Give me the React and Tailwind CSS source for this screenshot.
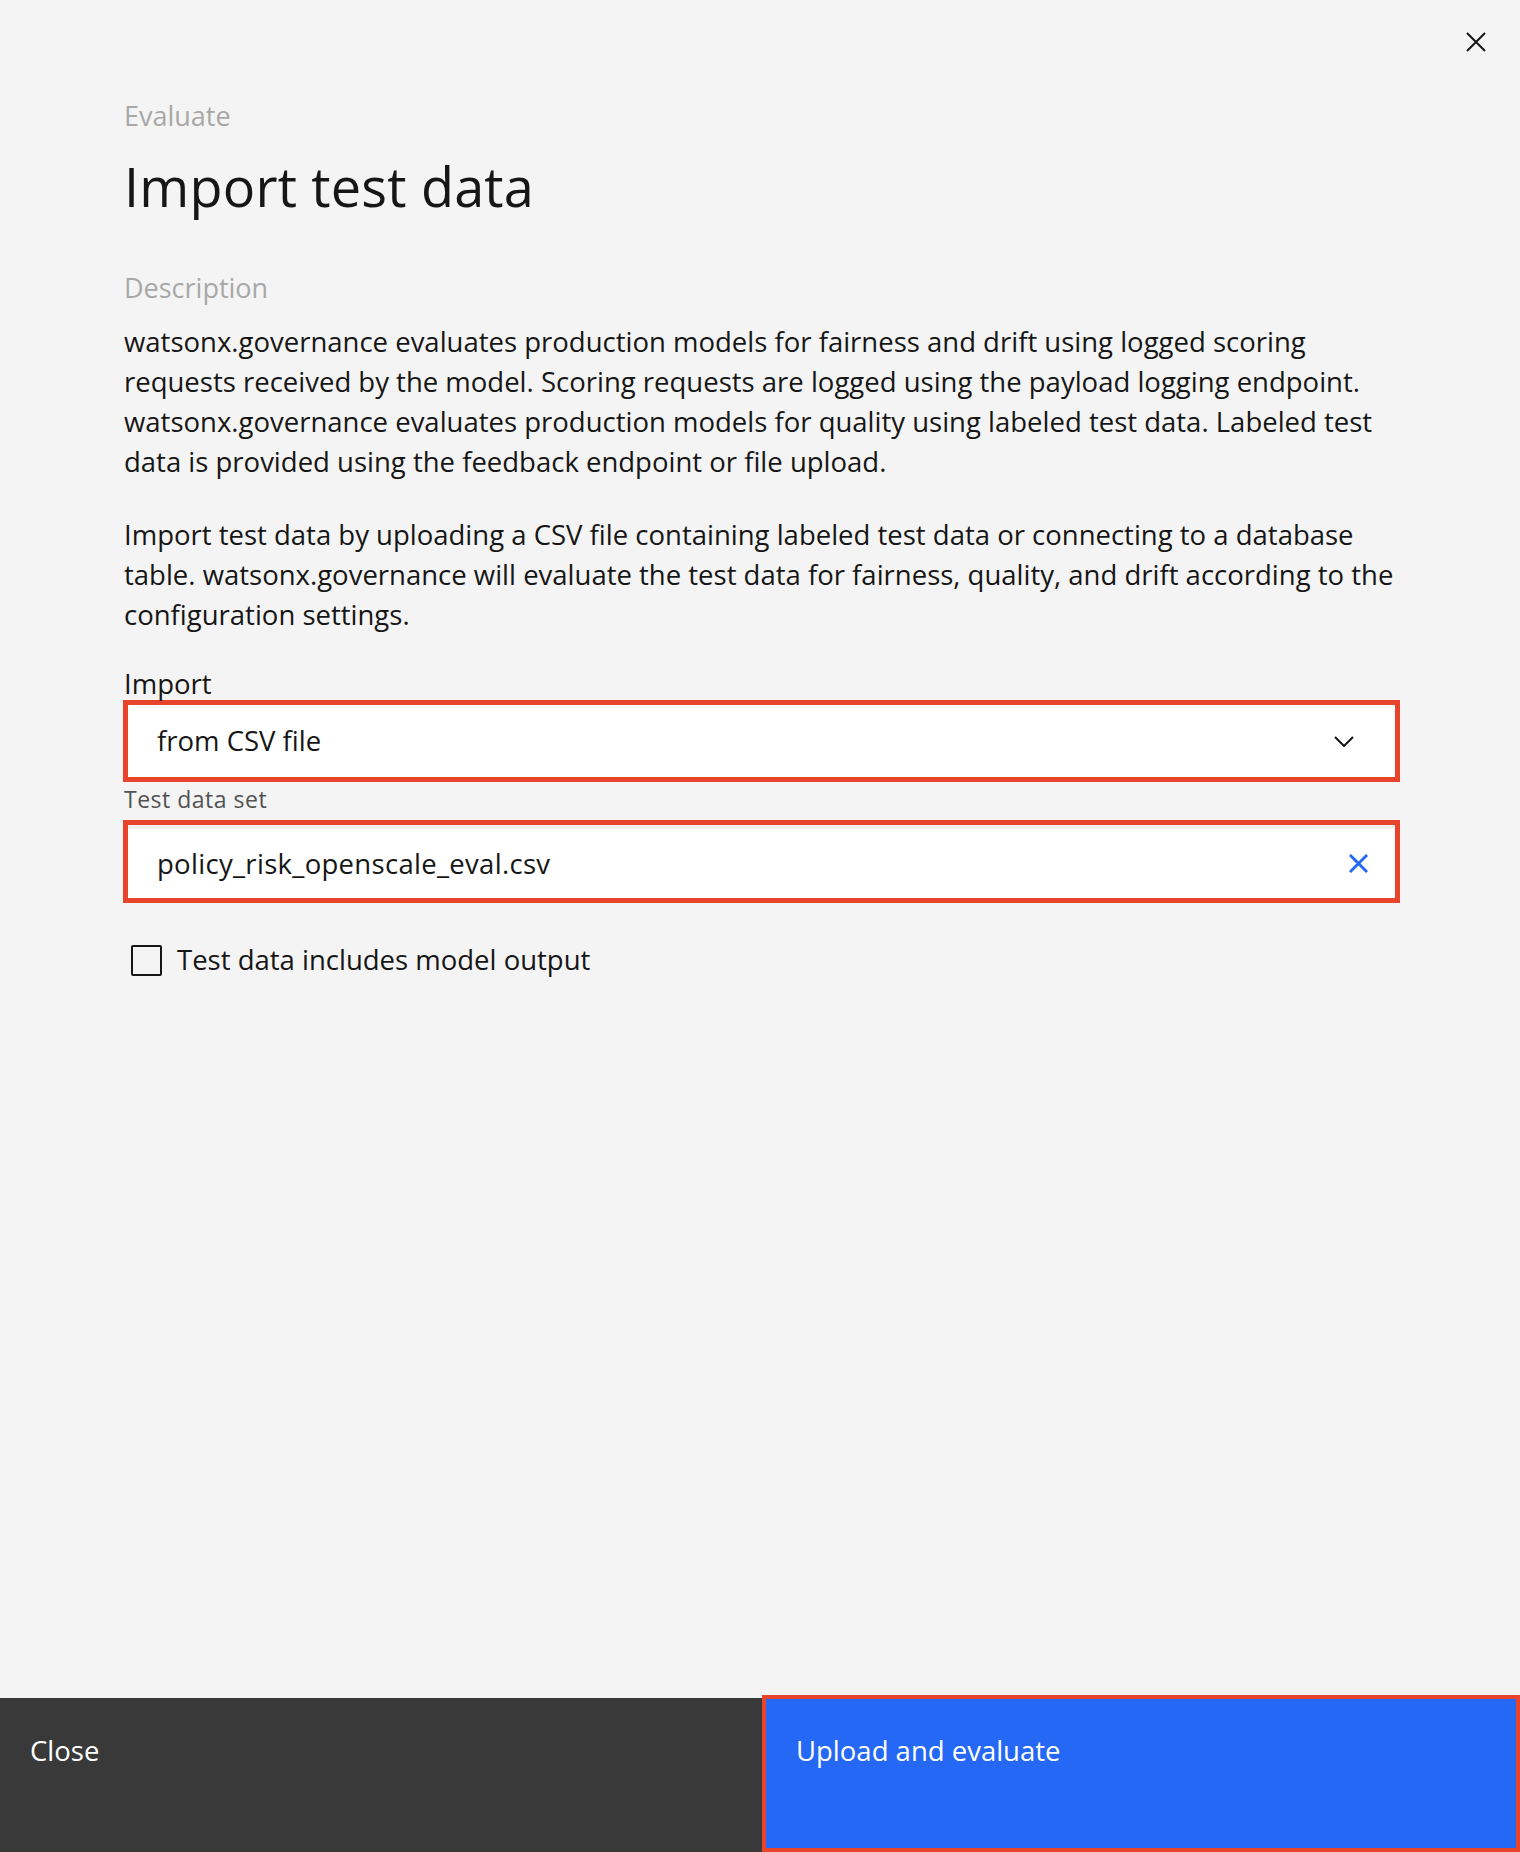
import React from 'react';

const FONT = { fontFamily: '"Open Sans", "Noto Sans", Arial, sans-serif' };

// Close (X) icon used top-right and inside the file field
const CrossIcon = ({ className, strokeWidth = 2 }) => (
  <svg className={className} viewBox="0 0 20 20" fill="none" stroke="currentColor" strokeWidth={strokeWidth}>
    <path d="M1 1 L19 19 M19 1 L1 19" />
  </svg>
);

const ChevronIcon = ({ className }) => (
  <svg className={className} viewBox="0 0 20 11" fill="none" stroke="currentColor" strokeWidth={2}>
    <path d="M1 1 L10 10 L19 1" />
  </svg>
);

export default function App() {
  return (
    <div className="h-screen w-full flex flex-col bg-[#f4f4f4] text-[#161616] overflow-hidden" style={FONT}>
      {/* Body */}
      <div className="relative flex-1 pl-[124px] pr-[120px] pt-[98px]">
        <button className="absolute right-[34px] top-[32px] w-[20px] h-[20px] text-[#161616]">
          <CrossIcon className="w-[20px] h-[20px]" />
        </button>

        <p className="text-[27px] leading-[36px] text-[#a8a8a8]">Evaluate</p>
        <h1 className="mt-[20px] text-[54px] leading-[64px] font-normal tracking-[0.2px]">Import test data</h1>

        <p className="mt-[52px] text-[27px] leading-[36px] text-[#a8a8a8]">Description</p>
        <p className="mt-[16px] text-[27.5px] leading-[40px] whitespace-nowrap">
          watsonx.governance evaluates production models for fairness and drift using logged scoring<br />
          requests received by the model. Scoring requests are logged using the payload logging endpoint.<br />
          watsonx.governance evaluates production models for quality using labeled test data. Labeled test<br />
          data is provided using the feedback endpoint or file upload.
        </p>
        <p className="mt-[33px] text-[27.5px] leading-[40px] whitespace-nowrap">
          Import test data by uploading a CSV file containing labeled test data or connecting to a database<br />
          table. watsonx.governance will evaluate the test data for fairness, quality, and drift according to the<br />
          configuration settings.
        </p>

        {/* Import select */}
        <p className="mt-[33px] text-[27.5px] leading-[32px]">Import</p>
        <div className="-ml-[1px] h-[82px] flex items-center justify-between bg-white border-[5px] border-[#e8442b] pl-[29px] pr-[41px]">
          <span className="text-[27.5px] leading-[36px]">from CSV file</span>
          <ChevronIcon className="w-[20px] h-[11px] text-[#161616]" />
        </div>

        {/* Test data set */}
        <p className="mt-[3px] text-[23px] leading-[28px] tracking-[0.5px] text-[#525252]">Test data set</p>
        <div className="-ml-[1px] mt-[7px] h-[83px] flex flex-col bg-white border-[5px] border-[#e8442b]">
          <div className="h-[4px] bg-[#f0f0f0]" />
          <div className="flex-1 flex items-center justify-between pl-[29px] pr-[27px]">
            <span className="text-[27.5px] leading-[36px] tracking-[0.3px]">policy_risk_openscale_eval.csv</span>
            <CrossIcon className="w-[19px] h-[19px] text-[#2468f2]" strokeWidth={3} />
          </div>
        </div>

        {/* Checkbox */}
        <label className="mt-[39px] ml-[7px] flex items-center gap-[15px]">
          <span className="w-[31px] h-[31px] border-2 border-[#161616] rounded-[2px]" />
          <span className="text-[27.5px] leading-[36px]">Test data includes model output</span>
        </label>
      </div>

      {/* Footer */}
      <div className="h-[157px] flex items-end">
        <button className="w-[762px] h-[154px] bg-[#393939] text-white text-left flex items-start pl-[30px] pt-[33px]">
          <span className="text-[27.5px] leading-[40px]">Close</span>
        </button>
        <button className="flex-1 h-[157px] bg-[#2468f5] border-[4px] border-[#e8442b] text-white text-left flex items-start pl-[30px] pt-[32px]">
          <span className="text-[27.5px] leading-[40px]">Upload and evaluate</span>
        </button>
      </div>
    </div>
  );
}
